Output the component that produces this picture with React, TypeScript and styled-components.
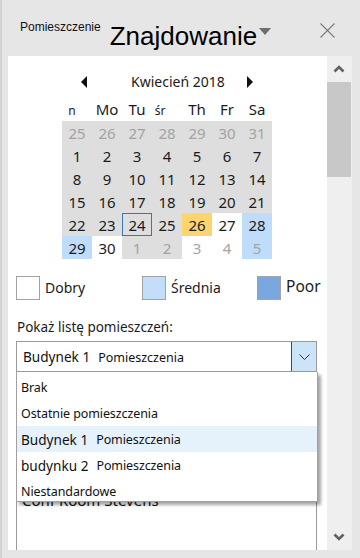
import React from "react";
import styled, { createGlobalStyle, css } from "styled-components";

const GlobalStyle = createGlobalStyle`
  html, body {
    margin: 0;
    padding: 0;
    background: #e6e6e6;
  }
  body {
    font-family: "Noto Sans", "Open Sans", sans-serif;
    color: #1b1b1b;
  }
`;

const Window = styled.div`
  width: 360px;
  height: 558px;
  box-sizing: border-box;
  border-left: 2px solid #d3d3d3;
  background: #e6e6e6;
  display: flex;
  flex-direction: column;
  overflow: hidden;
`;

const TitleBar = styled.div`
  height: 56px;
  flex: none;
  display: flex;
  align-items: flex-start;
  padding-left: 18px;
  font-family: "Liberation Sans", Arial, sans-serif;
`;

const SmallTitle = styled.div`
  margin-top: 20px;
  font-size: 12px;
  line-height: 14px;
  color: #111;
`;

const BigTitle = styled.div`
  margin: 21px 0 0 9px;
  font-size: 26px;
  line-height: 30px;
  color: #000;
`;

const TitleCaret = styled.svg`
  margin: 28px 0 0 2px;
  width: 12px;
  height: 7px;
`;

const CloseButton = styled.svg`
  margin: 23px 25px 0 auto;
  width: 15px;
  height: 15px;
`;

const Body = styled.div`
  flex: 1;
  display: flex;
  padding: 0 8px 8px 6px;
  min-height: 0;
`;

const Panel = styled.div`
  flex: 1;
  background: #fff;
  display: flex;
  flex-direction: column;
  overflow: hidden;
  min-height: 0;
`;

const ScrollBar = styled.div`
  width: 25px;
  flex: none;
  background: #efefef;
  display: flex;
  flex-direction: column;
`;

const ScrollButton = styled.div`
  height: 26px;
  display: flex;
  align-items: center;
  justify-content: center;
  padding-right: 1px;
`;

const Thumb = styled.div`
  height: 95px;
  margin-right: 1px;
  background: #c8c8c8;
`;

const Spacer = styled.div`
  flex: 1;
`;

/* calendar */

const Calendar = styled.div`
  margin: 14px 0 0 54px;
  width: 210px;
`;

const MonthRow = styled.div`
  height: 24px;
  display: flex;
  align-items: center;
`;

const NavArrow = styled.svg<{ $gap: number }>`
  width: 6px;
  height: 12px;
  margin-left: ${(p) => p.$gap}px;
`;

const MonthTitle = styled.div`
  margin-left: 44px;
  width: 116px;
  font-size: 14px;
  line-height: 20px;
  color: #1b1b1b;
`;

const WeekRow = styled.div`
  margin-top: 4px;
  display: grid;
  grid-template-columns: repeat(7, 30px);
  height: 23px;
  align-items: baseline;
`;

const WeekDay = styled.div<{ $small?: boolean; $shift?: number }>`
  text-align: center;
  font-size: ${(p) => (p.$small ? 12 : 15)}px;
  line-height: 23px;
  color: #1b1b1b;
  ${(p) =>
    p.$shift &&
    css`
      padding-right: ${p.$shift}px;
    `}
`;

const DayGrid = styled.div`
  display: grid;
  grid-template-columns: repeat(7, 30px);
  grid-auto-rows: 23px;
`;

type Tone = "gray" | "white" | "blue" | "yellow";

const toneColors: Record<Tone, string> = {
  gray: "#dedede",
  white: "#ffffff",
  blue: "#bfdcfb",
  yellow: "#fdd46e",
};

const Day = styled.div<{ $tone: Tone; $muted?: boolean; $today?: boolean }>`
  box-sizing: border-box;
  display: flex;
  align-items: center;
  justify-content: center;
  font-size: 15px;
  background: ${(p) => toneColors[p.$tone]};
  color: ${(p) => (p.$muted ? "#a3a3a3" : "#1b1b1b")};
  border: 1px solid ${(p) => (p.$today ? "#3a78b5" : "transparent")};
`;

/* legend */

const Legend = styled.div`
  margin: 17px 0 0 8px;
  display: grid;
  grid-template-columns: 126px 115px auto;
`;

const LegendItem = styled.div`
  display: flex;
  align-items: center;
  gap: 5px;
`;

const Swatch = styled.div<{ $color: string }>`
  width: 24px;
  height: 24px;
  box-sizing: border-box;
  border: 1px solid #a4a4a4;
  background: ${(p) => p.$color};
`;

const LegendText = styled.span<{ $big?: boolean }>`
  font-size: ${(p) => (p.$big ? 15.5 : 14)}px;
  line-height: 20px;
  color: #1b1b1b;
  ${(p) =>
    p.$big &&
    css`
      margin-top: -5px;
    `}
`;

const FieldLabel = styled.div`
  margin: 18px 0 0 9px;
  font-size: 13.5px;
  line-height: 18px;
  color: #1b1b1b;
`;

/* combo */

const ComboWrap = styled.div`
  position: relative;
  margin: 5px 10px 0 8px;
  z-index: 2;
`;

const Combo = styled.div`
  height: 31px;
  box-sizing: border-box;
  border: 1px solid #9a9a9a;
  display: flex;
  align-items: center;
`;

const ComboValue = styled.div`
  flex: 1;
  padding-left: 6px;
  font-size: 14px;
  color: #111;
  white-space: nowrap;
`;

const ComboRoom = styled.span`
  font-size: 12.5px;
`;

const ComboButton = styled.div`
  width: 24px;
  align-self: stretch;
  background: #cce4f7;
  border-left: 1px solid #0058a8;
  display: flex;
  align-items: center;
  justify-content: center;
`;

const Popup = styled.div`
  position: absolute;
  top: 100%;
  left: 0;
  right: -1px;
  height: 130px;
  box-sizing: border-box;
  border: 1px solid #a0a0a0;
  border-top: none;
  background: #fff;
  box-shadow: 3px 3px 3px rgba(0, 0, 0, 0.35);
  padding-top: 2px;
`;

const Option = styled.div<{ $active?: boolean }>`
  height: 26px;
  display: flex;
  align-items: center;
  padding-left: 4px;
  font-size: 12.5px;
  letter-spacing: -0.1px;
  color: #111;
  white-space: nowrap;
  background: ${(p) => (p.$active ? "#e5f1fb" : "transparent")};
`;

const Building = styled.span`
  font-size: 13.6px;
  letter-spacing: 0;
  margin-right: 8px;
`;

const RoomList = styled.div`
  flex: 1;
  margin: 110px 10px 0 8px;
  border: 1px solid #9a9a9a;
  border-bottom: none;
  padding: 7px 0 0 5px;
`;

const RoomItem = styled.div`
  font-size: 15px;
  line-height: 20px;
  color: #111;
`;

const weeks: { d: number; tone: Tone; muted?: boolean; today?: boolean }[][] = [
  [25, 26, 27, 28, 29, 30, 31].map((d) => ({ d, tone: "gray" as Tone, muted: true })),
  [1, 2, 3, 4, 5, 6, 7].map((d) => ({ d, tone: "gray" as Tone })),
  [8, 9, 10, 11, 12, 13, 14].map((d) => ({ d, tone: "gray" as Tone })),
  [15, 16, 17, 18, 19, 20, 21].map((d) => ({ d, tone: "gray" as Tone })),
  [
    { d: 22, tone: "gray" },
    { d: 23, tone: "gray" },
    { d: 24, tone: "gray", today: true },
    { d: 25, tone: "gray" },
    { d: 26, tone: "yellow" },
    { d: 27, tone: "white" },
    { d: 28, tone: "blue" },
  ],
  [
    { d: 29, tone: "blue" },
    { d: 30, tone: "white" },
    { d: 1, tone: "gray", muted: true },
    { d: 2, tone: "gray", muted: true },
    { d: 3, tone: "white", muted: true },
    { d: 4, tone: "white", muted: true },
    { d: 5, tone: "blue", muted: true },
  ],
];

const Chevron = ({ up }: { up?: boolean }) => (
  <svg width="12" height="8" viewBox="0 0 12 8">
    <polyline
      points={up ? "1.5,6.5 6,2 10.5,6.5" : "1.5,1.5 6,6 10.5,1.5"}
      fill="none"
      stroke="#606060"
      strokeWidth="2.6"
    />
  </svg>
);

const App: React.FC = () => {
  return (
    <>
      <GlobalStyle />
      <Window>
        <TitleBar>
          <SmallTitle>Pomieszczenie</SmallTitle>
          <BigTitle>Znajdowanie</BigTitle>
          <TitleCaret viewBox="0 0 12 7">
            <polygon points="0,0 12,0 6,7" fill="#6e6e6e" />
          </TitleCaret>
          <CloseButton viewBox="0 0 15 15">
            <path d="M0.5 0.5 L14.5 14.5 M14.5 0.5 L0.5 14.5" stroke="#7a7a7a" strokeWidth="1.1" />
          </CloseButton>
        </TitleBar>
        <Body>
          <Panel>
            <Calendar>
              <MonthRow>
                <NavArrow $gap={19} viewBox="0 0 6 12">
                  <polygon points="6,0 6,12 0,6" fill="#111" />
                </NavArrow>
                <MonthTitle>Kwiecień 2018</MonthTitle>
                <NavArrow $gap={0} viewBox="0 0 6 12">
                  <polygon points="0,0 0,12 6,6" fill="#111" />
                </NavArrow>
              </MonthRow>
              <WeekRow>
                <WeekDay $small $shift={10}>n</WeekDay>
                <WeekDay>Mo</WeekDay>
                <WeekDay>Tu</WeekDay>
                <WeekDay $small $shift={14}>śr</WeekDay>
                <WeekDay>Th</WeekDay>
                <WeekDay>Fr</WeekDay>
                <WeekDay>Sa</WeekDay>
              </WeekRow>
              <DayGrid>
                {weeks.flat().map((c, i) => (
                  <Day key={i} $tone={c.tone} $muted={c.muted} $today={c.today}>
                    {c.d}
                  </Day>
                ))}
              </DayGrid>
            </Calendar>

            <Legend>
              <LegendItem>
                <Swatch $color="#ffffff" />
                <LegendText>Dobry</LegendText>
              </LegendItem>
              <LegendItem>
                <Swatch $color="#c4ddfb" />
                <LegendText>Średnia</LegendText>
              </LegendItem>
              <LegendItem>
                <Swatch $color="#7aa7df" />
                <LegendText $big>Poor</LegendText>
              </LegendItem>
            </Legend>

            <FieldLabel>Pokaż listę pomieszczeń:</FieldLabel>

            <ComboWrap>
              <Combo>
                <ComboValue>
                  <Building>Budynek 1</Building>
                  <ComboRoom>Pomieszczenia</ComboRoom>
                </ComboValue>
                <ComboButton>
                  <svg width="11" height="6" viewBox="0 0 11 6">
                    <polyline points="0.5,0.5 5.5,5.5 10.5,0.5" fill="none" stroke="#333" strokeWidth="1" />
                  </svg>
                </ComboButton>
              </Combo>
              <Popup>
                <Option>Brak</Option>
                <Option>Ostatnie pomieszczenia</Option>
                <Option $active>
                  <Building>Budynek 1</Building>Pomieszczenia
                </Option>
                <Option>
                  <Building>budynku 2</Building>Pomieszczenia
                </Option>
                <Option>Niestandardowe</Option>
              </Popup>
            </ComboWrap>

            <RoomList>
              <RoomItem>Conf Room Stevens</RoomItem>
            </RoomList>
          </Panel>
          <ScrollBar>
            <ScrollButton>
              <Chevron up />
            </ScrollButton>
            <Thumb />
            <Spacer />
            <ScrollButton>
              <Chevron />
            </ScrollButton>
          </ScrollBar>
        </Body>
      </Window>
    </>
  );
};

export default App;
